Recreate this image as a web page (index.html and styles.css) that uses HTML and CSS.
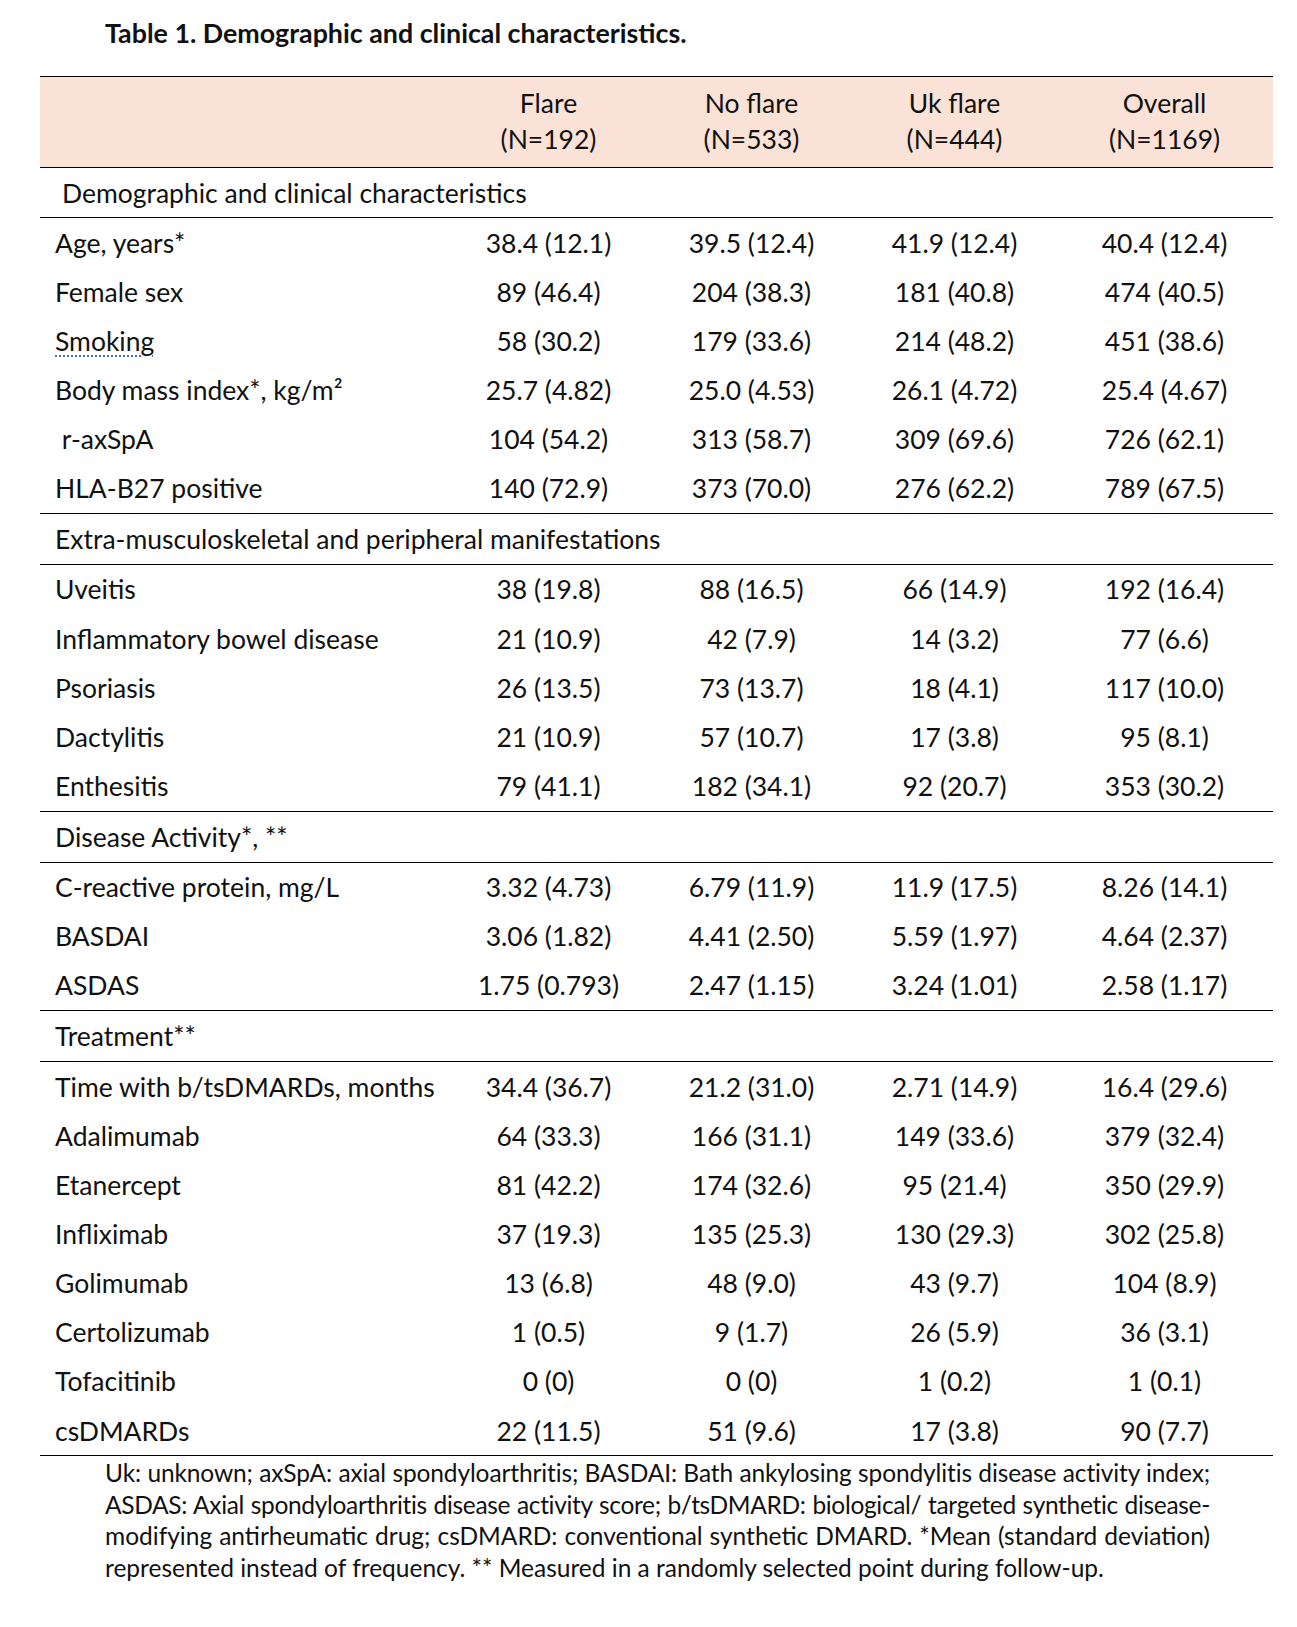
FILE: index.html
```html
<!DOCTYPE html>
<html lang="en">
<head>
<meta charset="utf-8">
<title>Table 1</title>
<link rel="stylesheet" href="styles.css">
</head>
<body>
<div class="page">
  <h1 class="title">Table 1. Demographic and clinical characteristics.</h1>
  <div class="tbl">
    <div class="head">
      <div></div>
      <div class="hc">Flare<br>(N=192)</div>
      <div class="hc">No flare<br>(N=533)</div>
      <div class="hc">Uk flare<br>(N=444)</div>
      <div class="hc">Overall<br>(N=1169)</div>
    </div>

    <div class="sect first"><span>Demographic and clinical characteristics</span></div>
    <div class="row"><div class="lab">Age, years*</div><div class="v">38.4 (12.1)</div><div class="v">39.5 (12.4)</div><div class="v">41.9 (12.4)</div><div class="v">40.4 (12.4)</div></div>
    <div class="row"><div class="lab">Female sex</div><div class="v">89 (46.4)</div><div class="v">204 (38.3)</div><div class="v">181 (40.8)</div><div class="v">474 (40.5)</div></div>
    <div class="row"><div class="lab"><span class="spell">Smoking</span></div><div class="v">58 (30.2)</div><div class="v">179 (33.6)</div><div class="v">214 (48.2)</div><div class="v">451 (38.6)</div></div>
    <div class="row"><div class="lab">Body mass index*, kg/m²</div><div class="v">25.7 (4.82)</div><div class="v">25.0 (4.53)</div><div class="v">26.1 (4.72)</div><div class="v">25.4 (4.67)</div></div>
    <div class="row"><div class="lab">&nbsp;r-axSpA</div><div class="v">104 (54.2)</div><div class="v">313 (58.7)</div><div class="v">309 (69.6)</div><div class="v">726 (62.1)</div></div>
    <div class="row"><div class="lab">HLA-B27 positive</div><div class="v">140 (72.9)</div><div class="v">373 (70.0)</div><div class="v">276 (62.2)</div><div class="v">789 (67.5)</div></div>

    <div class="sect"><span>Extra-musculoskeletal and peripheral manifestations</span></div>
    <div class="row"><div class="lab">Uveitis</div><div class="v">38 (19.8)</div><div class="v">88 (16.5)</div><div class="v">66 (14.9)</div><div class="v">192 (16.4)</div></div>
    <div class="row"><div class="lab">Inflammatory bowel disease</div><div class="v">21 (10.9)</div><div class="v">42 (7.9)</div><div class="v">14 (3.2)</div><div class="v">77 (6.6)</div></div>
    <div class="row"><div class="lab">Psoriasis</div><div class="v">26 (13.5)</div><div class="v">73 (13.7)</div><div class="v">18 (4.1)</div><div class="v">117 (10.0)</div></div>
    <div class="row"><div class="lab">Dactylitis</div><div class="v">21 (10.9)</div><div class="v">57 (10.7)</div><div class="v">17 (3.8)</div><div class="v">95 (8.1)</div></div>
    <div class="row"><div class="lab">Enthesitis</div><div class="v">79 (41.1)</div><div class="v">182 (34.1)</div><div class="v">92 (20.7)</div><div class="v">353 (30.2)</div></div>

    <div class="sect"><span>Disease Activity*, **</span></div>
    <div class="row"><div class="lab">C-reactive protein, mg/L</div><div class="v">3.32 (4.73)</div><div class="v">6.79 (11.9)</div><div class="v">11.9 (17.5)</div><div class="v">8.26 (14.1)</div></div>
    <div class="row"><div class="lab">BASDAI</div><div class="v">3.06 (1.82)</div><div class="v">4.41 (2.50)</div><div class="v">5.59 (1.97)</div><div class="v">4.64 (2.37)</div></div>
    <div class="row"><div class="lab">ASDAS</div><div class="v">1.75 (0.793)</div><div class="v">2.47 (1.15)</div><div class="v">3.24 (1.01)</div><div class="v">2.58 (1.17)</div></div>

    <div class="sect"><span>Treatment**</span></div>
    <div class="row"><div class="lab">Time with b/tsDMARDs, months</div><div class="v">34.4 (36.7)</div><div class="v">21.2 (31.0)</div><div class="v">2.71 (14.9)</div><div class="v">16.4 (29.6)</div></div>
    <div class="row"><div class="lab">Adalimumab</div><div class="v">64 (33.3)</div><div class="v">166 (31.1)</div><div class="v">149 (33.6)</div><div class="v">379 (32.4)</div></div>
    <div class="row"><div class="lab">Etanercept</div><div class="v">81 (42.2)</div><div class="v">174 (32.6)</div><div class="v">95 (21.4)</div><div class="v">350 (29.9)</div></div>
    <div class="row"><div class="lab">Infliximab</div><div class="v">37 (19.3)</div><div class="v">135 (25.3)</div><div class="v">130 (29.3)</div><div class="v">302 (25.8)</div></div>
    <div class="row"><div class="lab">Golimumab</div><div class="v">13 (6.8)</div><div class="v">48 (9.0)</div><div class="v">43 (9.7)</div><div class="v">104 (8.9)</div></div>
    <div class="row"><div class="lab">Certolizumab</div><div class="v">1 (0.5)</div><div class="v">9 (1.7)</div><div class="v">26 (5.9)</div><div class="v">36 (3.1)</div></div>
    <div class="row"><div class="lab">Tofacitinib</div><div class="v">0 (0)</div><div class="v">0 (0)</div><div class="v">1 (0.2)</div><div class="v">1 (0.1)</div></div>
    <div class="row"><div class="lab">csDMARDs</div><div class="v">22 (11.5)</div><div class="v">51 (9.6)</div><div class="v">17 (3.8)</div><div class="v">90 (7.7)</div></div>
  </div>
  <div class="note">
    <div class="nl l1">Uk: unknown; axSpA: axial spondyloarthritis; BASDAI: Bath ankylosing spondylitis disease activity index;</div>
    <div class="nl l2">ASDAS: Axial spondyloarthritis disease activity score; b/tsDMARD: biological/ targeted synthetic disease-</div>
    <div class="nl">modifying antirheumatic drug; csDMARD: conventional synthetic DMARD. *Mean (standard deviation)</div>
    <div class="nl last">represented instead of frequency. ** Measured in a randomly selected point during follow-up.</div>
  </div>
</div>
</body>
</html>
```

FILE: styles.css
```css
html, body {
  margin: 0;
  padding: 0;
  background: #ffffff;
}

body {
  font-family: "Lato", "Open Sans", "Liberation Sans", sans-serif;
  color: #111111;
  font-size: 26.5px;
}

.page {
  width: 1297px;
  padding-top: 18px;
}

.title {
  margin: 0 0 28px 105px;
  font-size: 26.8px;
  font-weight: 700;
  line-height: 30px;
  height: 30px;
  white-space: nowrap;
}

.tbl {
  margin-left: 40px;
  width: 1233px;
  border-top: 1px solid #000;
  border-bottom: 1px solid #000;
}

.head,
.row {
  display: grid;
  grid-template-columns: 407px 203px 203px 203px 217px;
  align-items: center;
}

.head {
  height: 90px;
  background: #fae2d6;
  padding-bottom: 3px;
  box-sizing: border-box;
}

.hc {
  text-align: center;
  line-height: 36px;
  white-space: nowrap;
}

.sect {
  display: flex;
  align-items: center;
  height: 52px;
  box-sizing: border-box;
  border-top: 1px solid #000;
  border-bottom: 1px solid #000;
  padding-left: 15px;
  white-space: nowrap;
}

.sect.first {
  height: 51px;
  padding-left: 22px;
}

.row {
  height: 49.15px;
}

.lab {
  padding-left: 15px;
  white-space: pre;
}

.v {
  text-align: center;
  white-space: nowrap;
}

.spell {
  text-decoration-line: underline;
  text-decoration-style: dotted;
  text-decoration-color: #4a6cc4;
  text-decoration-thickness: 2px;
  text-underline-offset: 5px;
}

.note {
  margin: 1px 0 0 105px;
  width: 1105px;
  font-size: 24.5px;
}

.nl {
  line-height: 31.6px;
  text-align: justify;
  text-align-last: justify;
  white-space: nowrap;
}

.nl.l1 {
  letter-spacing: -0.12px;
}

.nl.l2 {
  letter-spacing: -0.32px;
}

.nl.last {
  text-align-last: left;
}
```
